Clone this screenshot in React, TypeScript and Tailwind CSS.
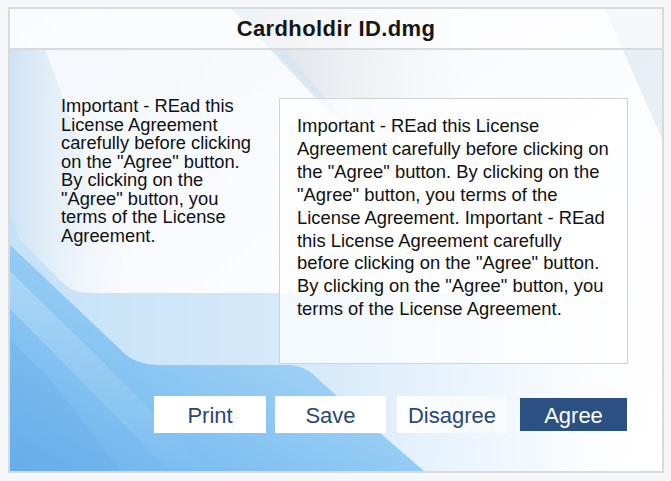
import React from "react";

function Backdrop() {
  return (
    <svg
      className="absolute inset-0 h-full w-full"
      viewBox="0 0 652 462"
      preserveAspectRatio="none"
    >
      <defs>
        <linearGradient id="base" x1="0" y1="0" x2="1" y2="1">
          <stop offset="0" stopColor="#f3f7fb" />
          <stop offset="0.5" stopColor="#fbfcfe" />
          <stop offset="1" stopColor="#ffffff" />
        </linearGradient>
        <linearGradient id="gray" x1="0" y1="0" x2="1" y2="0">
          <stop offset="0" stopColor="#d6dce3" stopOpacity="0.95" />
          <stop offset="0.4" stopColor="#e4e8ec" stopOpacity="0.7" />
          <stop offset="1" stopColor="#f4f6f8" stopOpacity="0" />
        </linearGradient>
        <linearGradient id="leftTint" x1="0" y1="0" x2="1" y2="0">
          <stop offset="0" stopColor="#cfe3f3" />
          <stop offset="1" stopColor="#eef5fb" stopOpacity="0" />
        </linearGradient>
        <linearGradient id="light" x1="0" y1="0" x2="1" y2="0">
          <stop offset="0" stopColor="#c4e1f7" />
          <stop offset="0.5" stopColor="#d8ebfa" />
          <stop offset="0.8" stopColor="#eef6fd" stopOpacity="0.7" />
          <stop offset="1" stopColor="#ffffff" stopOpacity="0" />
        </linearGradient>
        <linearGradient id="dark" x1="0" y1="1" x2="0.9" y2="0.1">
          <stop offset="0" stopColor="#68b0eb" />
          <stop offset="0.45" stopColor="#8cc7f3" />
          <stop offset="1" stopColor="#b9def8" />
        </linearGradient>
        <linearGradient id="streak" x1="0" y1="0" x2="1" y2="1">
          <stop offset="0" stopColor="#ffffff" stopOpacity="0.25" />
          <stop offset="1" stopColor="#ffffff" stopOpacity="0" />
        </linearGradient>
      </defs>
      <rect width="652" height="462" fill="url(#base)" />
      {/* gray diagonal sheen at top */}
      <path d="M222 0 L480 0 L420 140 L330 110 Z" fill="url(#gray)" />
      <path d="M222 0 L240 0 L335 112 L318 102 Z" fill="#d7e6f2" opacity="0.8" />
      {/* upper right tint */}
      <path d="M595 0 L652 0 L652 130 Z" fill="#e2ebf3" opacity="0.8" />
      {/* left light tint */}
      <path d="M0 40 L35 40 L125 284 L0 284 Z" fill="url(#leftTint)" />
      {/* light blue band */}
      <path
        d="M0 205 L10 231 L55 276 Q64 284 80 284 L652 284 L652 462 L0 462 Z"
        fill="url(#light)"
      />
      {/* darker blue wave */}
      <path
        d="M0 236 L112 342 Q125 356 150 356 L278 356 Q296 356 310 372 L414 462 L0 462 Z"
        fill="url(#dark)"
      />
      <path d="M0 262 L90 350 L200 462 L160 462 L0 300 Z" fill="url(#streak)" />
      <path
        d="M0 330 L40 370 L110 462 L0 462 Z"
        fill="#5aa6e6"
        opacity="0.2"
      />
    </svg>
  );
}

export default function App() {
  const font = { fontFamily: '"Liberation Sans", Arial, sans-serif' };
  return (
    <div
      className="h-[481px] w-[671px] bg-[#f5f6f7] pl-[8px] pt-[7px]"
      style={font}
    >
      <div className="relative flex h-[466px] w-[656px] flex-col overflow-hidden border-2 border-[#d8dbde]">
        <Backdrop />
        <div className="relative flex h-[41px] shrink-0 items-center justify-center border-b-2 border-[#d8dbde] bg-white/55">
          <span className="text-[22px] font-bold tracking-[0.4px] text-[#151515]">
            Cardholdir ID.dmg
          </span>
        </div>
        <div className="relative flex flex-1 flex-col">
          <div className="flex items-start">
            <p className="ml-[51px] mt-[47px] w-[198px] text-[18.3px] leading-[18.5px] text-[#111]">
              Important - REad this License Agreement carefully before clicking
              on the "Agree" button. By clicking on the "Agree" button, you
              terms of the License Agreement.
            </p>
            <div className="ml-[20px] mt-[48px] h-[266px] w-[349px] border border-[#d0d2d4] bg-white/70 pl-[17px] pr-[14px] pt-[16px]">
              <p className="text-[18.4px] leading-[22.9px] text-[#111]">
                Important - REad this License Agreement carefully before
                clicking on the "Agree" button. By clicking on the "Agree"
                button, you terms of the License Agreement. Important - REad
                this License Agreement carefully before clicking on the "Agree"
                button. By clicking on the "Agree" button, you terms of the
                License Agreement.
              </p>
            </div>
          </div>
          <div className="ml-[144px] mt-[32px] flex items-center">
            <div className="flex h-[37px] w-[112px] items-center justify-center bg-white pt-[2px] text-[22px] text-[#2b4774]">
              Print
            </div>
            <div className="ml-[9px] flex h-[37px] w-[111px] items-center justify-center bg-white pt-[2px] text-[22px] text-[#2b4774]">
              Save
            </div>
            <div className="ml-[11px] flex h-[37px] w-[110px] items-center justify-center bg-gradient-to-r from-white/90 to-white/50 pt-[2px] text-[22px] text-[#2b4774]">
              Disagree
            </div>
            <div className="ml-[13px] flex h-[33px] w-[107px] items-center justify-center bg-[#2b5082] pt-[2px] text-[22px] text-white">
              Agree
            </div>
          </div>
        </div>
      </div>
    </div>
  );
}
